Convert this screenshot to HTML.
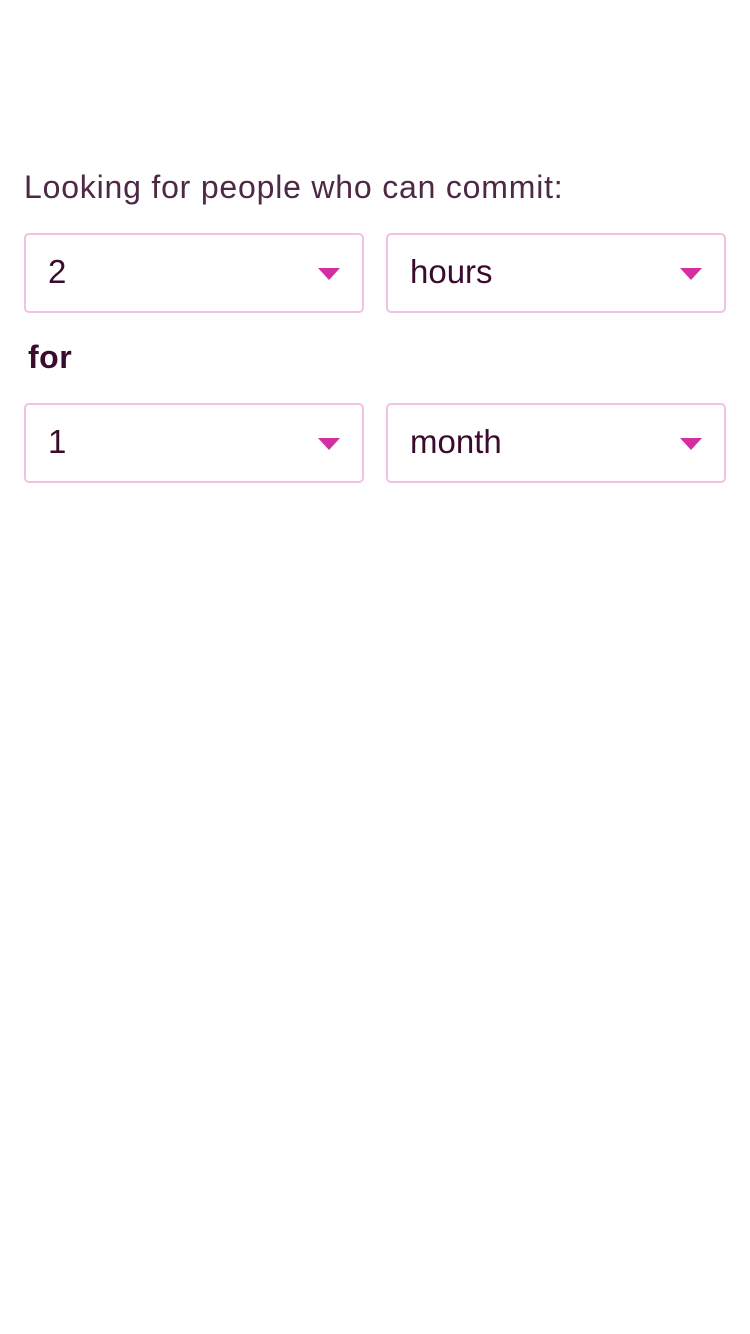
<!DOCTYPE html>
<html><head><style>
body{margin:0;width:750px;height:1334px;background:#fff;font-family:"Liberation Sans",sans-serif;position:relative}
.lbl{position:absolute;left:24px;top:169px;font-size:32px;letter-spacing:0.8px;color:#4e2945;}
.for{position:absolute;left:28px;top:339px;font-size:32px;font-weight:bold;letter-spacing:0.5px;color:#3a0b2c;}
.box{position:absolute;width:336px;height:76px;border:2px solid #f0c2e3;border-radius:5px;box-sizing:content-box;}
.box span{position:absolute;left:22px;top:18px;font-size:33px;color:#3a0b2c;}
.box i{position:absolute;right:22px;top:33px;width:0;height:0;border-left:11px solid transparent;border-right:11px solid transparent;border-top:12px solid #d42fa0;}
</style></head><body>
<div class="lbl">Looking for people who can commit:</div>
<div class="box" style="left:24px;top:233px"><span>2</span><i></i></div>
<div class="box" style="left:386px;top:233px"><span>hours</span><i></i></div>
<div class="for">for</div>
<div class="box" style="left:24px;top:403px"><span>1</span><i></i></div>
<div class="box" style="left:386px;top:403px"><span>month</span><i></i></div>
</body></html>
